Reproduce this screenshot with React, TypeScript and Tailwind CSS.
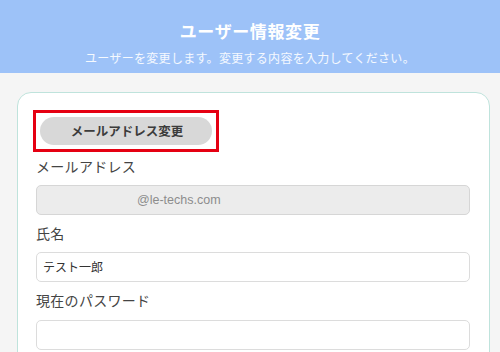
import React from "react";

const font = { fontFamily: '"Noto Sans CJK JP", "Noto Sans", sans-serif' };

export default function App() {
  return (
    <div className="w-[500px] h-[352px] overflow-hidden bg-[#f5f5f5]" style={font}>
      <header className="h-[73px] bg-[#9dc2f8] flex flex-col items-center text-white">
        <h1 className="mt-[19px] text-[17px] leading-[24px] font-bold tracking-[0.6px]">ユーザー情報変更</h1>
        <p className="mt-[6px] text-[12px] leading-[18px] tracking-[0.3px] text-white/90">ユーザーを変更します。変更する内容を入力してください。</p>
      </header>
      <main className="pt-[19px] pl-[17px] pr-[10px]">
        <div className="bg-white border border-[#bfe3dc] rounded-[14px] pt-[17px] pl-[18px] pr-[19px] pb-4 h-[300px]">
          <div className="-ml-[3px] w-[186px] h-[42px] border-[3px] border-[#e50012] p-[4px]">
            <button className="w-full h-full rounded-full bg-[#d8d8d8] text-[12.5px] font-bold text-[#3c3c3c] flex items-center justify-center pl-[2px]">
              メールアドレス変更
            </button>
          </div>
          <label className="block mt-[4px] h-[20px] leading-[20px] text-[14px] tracking-[0.3px] text-[#444]">メールアドレス</label>
          <div className="mt-[9px] h-[30px] rounded-[5px] border border-[#d6d6d6] bg-[#ececec] flex items-center pl-[100px] text-[12.5px] text-[#8c8c8c]" style={{ fontFamily: '"Liberation Sans", Arial, sans-serif' }}>
            @le-techs.com
          </div>
          <label className="block mt-[8px] h-[20px] leading-[20px] text-[14px] tracking-[0.3px] text-[#444]">氏名</label>
          <div className="mt-[9px] h-[30px] rounded-[5px] border border-[#dcdcdc] bg-white flex items-center pl-[6px] text-[12px] text-[#333]">
            テスト一郎
          </div>
          <label className="block mt-[8px] h-[20px] leading-[20px] text-[14px] tracking-[0.3px] text-[#444]">現在のパスワード</label>
          <div className="mt-[10px] h-[30px] rounded-[5px] border border-[#dcdcdc] bg-white"></div>
        </div>
      </main>
    </div>
  );
}
